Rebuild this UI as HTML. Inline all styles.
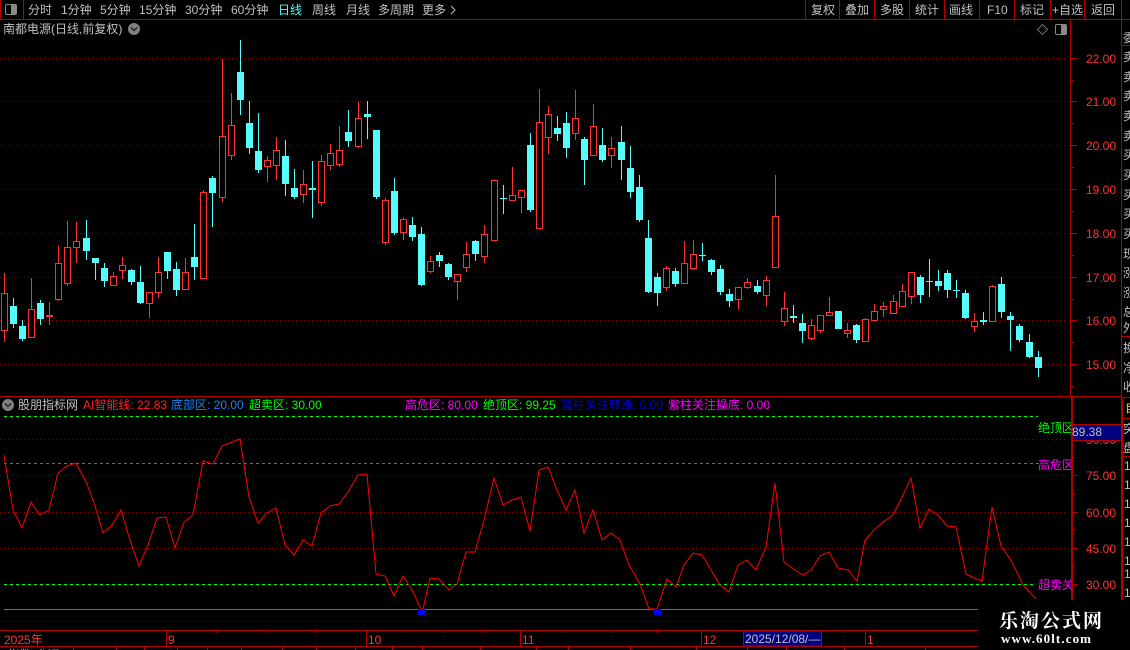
<!DOCTYPE html>
<html><head><meta charset="utf-8">
<style>
html,body{margin:0;padding:0;background:#000;width:1130px;height:650px;overflow:hidden}
svg{display:block;position:absolute;left:0;top:0}
text{font-family:"Liberation Sans","WenQuanYi Zen Hei","Noto Sans CJK SC",sans-serif;font-size:12px}
.t text{fill:#c0c0c0}
.ax text{fill:#ff3232}
</style></head><body>
<svg width="1130" height="650" viewBox="0 0 1130 650" xmlns="http://www.w3.org/2000/svg">
<rect width="1130" height="650" fill="#000"/>
<!-- upper grid -->
<g stroke="#8c0000" stroke-dasharray="1 3" shape-rendering="crispEdges">
<path d="M0 58.5H1068M0 101.5H1068M0 145.5H1068M0 189.5H1068M0 233.5H1068M0 277.5H1068M0 320.5H1068M0 364.5H1068"/>
<path d="M0 439.5H1066M0 475.5H1066M0 512.5H1066M0 548.5H1066M0 621.5H978"/>
</g>
<!-- frame lines -->
<g fill="#b40000" shape-rendering="crispEdges">
<rect x="0" y="19" width="1130" height="1"/>
<rect x="0" y="0" width="1" height="19"/>
<rect x="23" y="0" width="1" height="19"/>
<rect x="805" y="0" width="1" height="19"/><rect x="839" y="0" width="1" height="19"/><rect x="874" y="0" width="1" height="19"/><rect x="909" y="0" width="1" height="19"/><rect x="944" y="0" width="1" height="19"/><rect x="979" y="0" width="1" height="19"/><rect x="1014" y="0" width="1" height="19"/><rect x="1050" y="0" width="1" height="19"/><rect x="1084" y="0" width="1" height="19"/><rect x="1121" y="0" width="1" height="19"/>
<rect x="1070" y="20" width="1" height="377"/>
<rect x="0" y="396" width="1122" height="1"/>
<rect x="1121" y="20" width="1" height="377"/>
<rect x="1121" y="397" width="2" height="203"/>
<rect x="1122" y="45" width="8" height="1"/><rect x="1122" y="336" width="8" height="1"/><rect x="1122" y="397" width="8" height="1"/><rect x="1122" y="418" width="8" height="1"/><rect x="1122" y="456" width="8" height="1"/>
<rect x="0" y="630" width="978" height="1"/>
<rect x="0" y="646" width="978" height="1"/>
<rect x="166" y="630" width="1" height="16"/><rect x="366" y="630" width="1" height="16"/><rect x="520" y="630" width="1" height="16"/><rect x="701" y="630" width="1" height="16"/><rect x="865" y="630" width="1" height="16"/>
<path d="M216 631h1v2h-1zM266 631h1v2h-1zM316 631h1v2h-1zM405 631h1v2h-1zM443 631h1v2h-1zM482 631h1v2h-1zM565 631h1v2h-1zM611 631h1v2h-1zM656 631h1v2h-1zM843 631h1v2h-1z"/>
<path d="M43 647h1v3h-1zM73 647h1v3h-1zM116 647h1v3h-1zM144 647h1v3h-1zM177 647h1v3h-1zM207 647h1v3h-1zM241 647h1v3h-1zM282 647h1v3h-1zM316 647h1v3h-1zM355 647h1v3h-1zM392 647h1v3h-1zM422 647h1v3h-1zM480 647h1v3h-1zM536 647h1v3h-1zM568 647h1v3h-1zM630 647h1v3h-1zM696 647h1v3h-1zM747 647h1v3h-1zM786 647h1v3h-1zM844 647h1v3h-1zM925 647h1v3h-1z"/>
<path d="M1071 58h6v1h-6zM1071 101h6v1h-6zM1071 145h6v1h-6zM1071 189h6v1h-6zM1071 233h6v1h-6zM1071 277h6v1h-6zM1071 320h6v1h-6zM1071 364h6v1h-6z"/>
<path d="M1071 80h3v1h-3zM1071 123h3v1h-3zM1071 167h3v1h-3zM1071 211h3v1h-3zM1071 255h3v1h-3zM1071 299h3v1h-3zM1071 342h3v1h-3zM1071 386h3v1h-3z"/>
<path d="M1073 475h5v1h-5zM1073 512h5v1h-5zM1073 548h5v1h-5zM1073 584h5v1h-5zM1073 457h2v1h-2zM1073 494h2v1h-2zM1073 530h2v1h-2zM1073 566h2v1h-2z"/>
</g>
<!-- toolbar icon -->
<rect x="5.5" y="4.5" width="11" height="10" rx="1.5" fill="none" stroke="#8a8a8a"/><rect x="11" y="5" width="5" height="9" fill="#8a8a8a"/>
<rect x="1055.5" y="24.5" width="11" height="10" rx="1.5" fill="none" stroke="#8a8a8a"/><rect x="1061" y="25" width="5" height="9" fill="#8a8a8a"/>
<path d="M1042.5 24.5l5 5-5 5-5-5z" fill="none" stroke="#707070"/>
<!-- toolbar text -->
<g class="t">
<text x="28" y="14">分时</text><text x="61" y="14">1分钟</text><text x="100" y="14">5分钟</text><text x="139" y="14">15分钟</text><text x="185" y="14">30分钟</text><text x="231" y="14">60分钟</text>
<text x="278" y="14" style="fill:#54fcfc">日线</text>
<text x="312" y="14">周线</text><text x="346" y="14">月线</text><text x="378" y="14">多周期</text><text x="422" y="14">更多</text>
<text x="811" y="14">复权</text><text x="845" y="14">叠加</text><text x="880" y="14">多股</text><text x="915" y="14">统计</text><text x="949" y="14">画线</text><text x="987" y="14">F10</text><text x="1020" y="14">标记</text><text x="1052" y="14">+自选</text><text x="1091" y="14">返回</text>
<text x="3" y="33">南都电源(日线,前复权)</text>
<text x="18" y="409">股朋指标网</text>
</g>
<path d="M451 6l4 4-4 4" fill="none" stroke="#c0c0c0"/>
<circle cx="134" cy="29" r="6" fill="#808080"/><path d="M131 27.5l3 3 3-3" fill="none" stroke="#1a1a1a" stroke-width="1.3"/>
<circle cx="8" cy="405" r="6" fill="#808080"/><path d="M5 403.5l3 3 3-3" fill="none" stroke="#1a1a1a" stroke-width="1.3"/>
<!-- price axis -->
<g class="ax">
<text x="1086" y="63">22.00</text><text x="1086" y="106">21.00</text><text x="1086" y="150">20.00</text><text x="1086" y="194">19.00</text><text x="1086" y="238">18.00</text><text x="1086" y="282">17.00</text><text x="1086" y="325">16.00</text><text x="1086" y="369">15.00</text>
<text x="1086" y="480">75.00</text><text x="1086" y="517">60.00</text><text x="1086" y="553">45.00</text><text x="1086" y="589">30.00</text><text x="1086" y="444">90.00</text>
<text x="4" y="644">2025年</text><text x="168" y="644">9</text><text x="368" y="644">10</text><text x="522" y="644">11</text><text x="703" y="644">12</text><text x="867" y="644">1</text>
</g>
<!-- wicks -->
<path shape-rendering="crispEdges" fill="none" stroke="#ff3232" d="M4.5 273V342M31.5 278V338M49.5 302V325M58.5 246V301M67.5 221V286M76.5 222V263M113.5 272V285M122.5 257V279M149.5 292V318M158.5 257V298M185.5 258V290M203.5 190V278M222.5 59V202M231.5 93V160M267.5 156V182M276.5 137V180M303.5 170V203M321.5 155V206M330.5 144V170M339.5 126V167M358.5 102V148M385.5 198V245M403.5 217V240M430.5 256V273M457.5 274V300M466.5 242V272M484.5 225V263M494.5 179V241M512.5 167V200M521.5 190V213M539.5 89V228M548.5 106V154M575.5 90V140M593.5 104V155M611.5 137V168M666.5 266V291M684.5 241V283M693.5 240V270M738.5 287V310M747.5 278V289M766.5 276V306M775.5 175V267M784.5 292V326M811.5 319V340M820.5 315V333M829.5 297V316M847.5 323V338M865.5 318V341M874.5 304V320M883.5 302V317M893.5 295V314M902.5 284V306M911.5 272V304M974.5 313V332M992.5 285V321"/>
<path shape-rendering="crispEdges" fill="#000" stroke="#ff3232" d="M1.5 293.5h6v37h-6zM28.5 309.5h6v28h-6zM55.5 263.5h6v36h-6zM64.5 247.5h6v36h-6zM73.5 241.5h6v6h-6zM110.5 276.5h6v9h-6zM119.5 265.5h6v5h-6zM146.5 292.5h6v11h-6zM155.5 272.5h6v20h-6zM182.5 272.5h6v17h-6zM200.5 192.5h6v86h-6zM219.5 136.5h6v61h-6zM228.5 125.5h6v30h-6zM264.5 160.5h6v6h-6zM273.5 150.5h6v15h-6zM300.5 184.5h6v10h-6zM318.5 161.5h6v41h-6zM327.5 153.5h6v12h-6zM336.5 150.5h6v14h-6zM355.5 118.5h6v28h-6zM382.5 200.5h6v42h-6zM400.5 219.5h6v13h-6zM427.5 261.5h6v10h-6zM454.5 274.5h6v7h-6zM463.5 254.5h6v13h-6zM481.5 234.5h6v22h-6zM491.5 180.5h6v60h-6zM509.5 195.5h6v5h-6zM518.5 190.5h6v7h-6zM536.5 122.5h6v106h-6zM545.5 114.5h6v23h-6zM572.5 118.5h6v15h-6zM590.5 126.5h6v29h-6zM608.5 148.5h6v7h-6zM663.5 268.5h6v19h-6zM681.5 263.5h6v20h-6zM690.5 254.5h6v14h-6zM735.5 287.5h6v12h-6zM744.5 282.5h6v5h-6zM763.5 280.5h6v15h-6zM772.5 216.5h6v51h-6zM781.5 308.5h6v13h-6zM808.5 325.5h6v13h-6zM817.5 315.5h6v15h-6zM826.5 312.5h6v3h-6zM844.5 330.5h6v3h-6zM862.5 319.5h6v22h-6zM871.5 311.5h6v9h-6zM880.5 306.5h6v3h-6zM890.5 301.5h6v12h-6zM899.5 291.5h6v15h-6zM908.5 272.5h6v24h-6zM971.5 321.5h6v5h-6zM989.5 286.5h6v35h-6z"/>
<rect x="46" y="315" width="7" height="2" fill="#ff3232"/>
<path shape-rendering="crispEdges" fill="none" stroke="#54fcfc" d="M13.5 298V328M22.5 320V341M40.5 300V325M86.5 220V260M95.5 258V280M104.5 263V287M131.5 269V285M140.5 266V304M167.5 252V279M176.5 262V296M194.5 224V280M212.5 176V227M240.5 40V115M249.5 101V154M258.5 113V173M285.5 140V196M294.5 169V199M312.5 161V218M348.5 110V147M367.5 101V139M376.5 130V199M394.5 178V235M412.5 217V241M421.5 227V286M439.5 252V267M448.5 263V280M475.5 240V261M503.5 185V214M530.5 133V212M557.5 116V141M566.5 112V158M584.5 137V185M602.5 128V162M621.5 126V180M630.5 146V198M639.5 175V222M648.5 220V293M657.5 273V306M675.5 268V287M702.5 243V261M711.5 259V275M720.5 265V295M729.5 289V307M757.5 280V294M793.5 305V323M802.5 314V343M838.5 311V329M856.5 324V343M920.5 275V303M929.5 259V297M938.5 270V291M947.5 270V298M956.5 280V298M965.5 290V319M983.5 312V325M1001.5 277V318M1010.5 312V351M1019.5 324V342M1029.5 334V358M1038.5 351V377"/>
<path shape-rendering="crispEdges" fill="#54fcfc" d="M10 306h7v18h-7zM19 326h7v13h-7zM37 303h7v16h-7zM83 238h7v13h-7zM92 258h7v5h-7zM101 268h7v13h-7zM128 270h7v12h-7zM137 282h7v21h-7zM164 252h7v19h-7zM173 269h7v21h-7zM191 257h7v10h-7zM209 178h7v15h-7zM237 72h7v28h-7zM246 123h7v25h-7zM255 151h7v19h-7zM282 156h7v28h-7zM291 188h7v9h-7zM309 188h7v2h-7zM345 132h7v9h-7zM364 114h7v3h-7zM373 130h7v67h-7zM391 191h7v42h-7zM409 225h7v12h-7zM418 234h7v51h-7zM436 255h7v6h-7zM445 264h7v13h-7zM472 241h7v13h-7zM500 198h7v1h-7zM527 145h7v65h-7zM554 128h7v6h-7zM563 123h7v25h-7zM581 139h7v21h-7zM599 145h7v15h-7zM618 142h7v18h-7zM627 168h7v24h-7zM636 187h7v33h-7zM645 238h7v54h-7zM654 277h7v16h-7zM672 271h7v13h-7zM699 255h7v1h-7zM708 260h7v12h-7zM717 269h7v23h-7zM726 294h7v7h-7zM754 286h7v6h-7zM790 316h7v2h-7zM799 323h7v8h-7zM835 311h7v18h-7zM853 325h7v15h-7zM917 277h7v18h-7zM926 281h7v1h-7zM935 281h7v5h-7zM944 273h7v17h-7zM953 290h7v1h-7zM962 293h7v25h-7zM980 320h7v2h-7zM998 284h7v28h-7zM1007 316h7v4h-7zM1016 326h7v14h-7zM1026 342h7v15h-7zM1035 357h7v11h-7z"/>
<!-- indicator header -->
<text x="83" y="409" fill="#ff2020">AI智能线: 22.83</text>
<text x="171" y="409" fill="#1e80f0">底部区: 20.00</text>
<text x="249" y="409" fill="#00ff00">超卖区: 30.00</text>
<text x="405" y="409" fill="#ff00ff">高危区: 80.00</text>
<text x="483" y="409" fill="#00ff00">绝顶区: 99.25</text>
<text x="561" y="409" fill="#0000e0">蓝柱关注转涨: 0.00</text>
<text x="668" y="409" fill="#ff00ff">紫柱关注操底: 0.00</text>
<!-- dashed levels -->
<g shape-rendering="crispEdges" fill="none">
<path d="M4 416.5H1038M4 584.5H1036" stroke="#00ff00" stroke-dasharray="3 3"/>
<path d="M4 463.5H1040" stroke="#ff00ff" stroke-dasharray="3 3"/>
<path d="M4 609.5H978" stroke="#1e80e0"/>
</g>
<!-- line -->
<polyline fill="none" stroke="#ff0000" stroke-width="1" points="4,455 13,510 22,528 31,502 40,515 49,510 58,473 67,466 76,463 87,484 94,503 103,533 112,525 121,510 130,540 139,566 148,545 157,518 166,517 175,548 184,522 193,515 203,461 213,464 222,446 240,439 249,497 258,523 267,513 276,508 285,545 294,555 303,540 312,546 321,513 330,506 339,504 348,492 358,475 367,474 376,574 385,576 394,596 403,576 412,590 421,609 423,609 430,578 439,579 449,590 457,584 466,552 475,552 484,520 494,478 503,505 512,500 521,497 530,531 539,470 548,467 557,490 566,510 575,490 584,533 593,510 602,540 611,533 620,540 629,565 640,584 649,609 657,609 667,579 676,587 684,565 693,553 702,555 711,570 720,585 729,592 738,565 747,560 756,570 766,547 775,483 784,562 795,570 803,575 811,570 820,556 829,552 838,568 848,570 857,581 865,540 874,530 883,522 893,515 902,497 911,478 920,528 929,509 938,515 947,526 956,527 966,574 974,578 982,581 992,507 1001,546 1011,560 1023,585 1036,599"/>
<rect x="418" y="609" width="7" height="6" fill="#0000ff"/>
<rect x="654" y="609" width="7" height="6" fill="#0000ff"/>
<!-- line labels -->
<text x="1038" y="432" fill="#00ff00">绝顶区</text>
<text x="1038" y="469" fill="#ff00ff">高危区</text>
<text x="1038" y="589" fill="#ff00ff">超卖关</text>
<rect x="1071" y="397" width="2" height="203" fill="#b40000" shape-rendering="crispEdges"/>
<!-- value box -->
<rect x="1073" y="424" width="48" height="16" fill="#000080"/>
<path d="M1073 424.5H1121M1073 440.5H1121" stroke="#b40000" shape-rendering="crispEdges"/>
<text x="1072" y="436" fill="#c0c0c0">89.38</text>
<rect x="743.5" y="631" width="78" height="15" fill="#000080" stroke="#b40000"/>
<text x="745" y="643" fill="#c0c0c0">2025/12/08/—</text>
<!-- right column clipped -->
<g class="t">
<text x="1123" y="42">委</text><text x="1123" y="61">卖</text><text x="1123" y="81">卖</text><text x="1123" y="100">卖</text><text x="1123" y="120">卖</text><text x="1123" y="140">卖</text><text x="1123" y="159">买</text><text x="1123" y="179">买</text><text x="1123" y="199">买</text><text x="1123" y="218">买</text><text x="1123" y="238">买</text><text x="1123" y="258">现</text><text x="1123" y="277">涨</text><text x="1123" y="297">涨</text><text x="1123" y="316">总</text><text x="1123" y="332">外</text><text x="1123" y="352">换</text><text x="1123" y="372">净</text><text x="1123" y="391">收</text>
<text x="1125" y="412" style="fill:#e0e000">自</text><text x="1123" y="433">突</text><text x="1123" y="452">盘</text>
<text x="1124" y="470">1</text><text x="1124" y="489">1</text><text x="1124" y="508">1</text><text x="1124" y="527">1</text><text x="1124" y="546">1</text><text x="1124" y="565">1</text><text x="1124" y="578">1</text><text x="1124" y="597">1</text>
</g>
<text x="8" y="659" fill="#c0c0c0">指数 上证</text>
<!-- watermark -->
<rect x="978" y="600" width="152" height="50" fill="#000"/>
<text x="999" y="627" fill="#fff" font-weight="700" style="font-family:'Noto Serif CJK SC','Liberation Serif',serif;font-size:19px;letter-spacing:2px">乐淘公式网</text>
<text x="1001" y="643" fill="#fff" font-weight="700" textLength="90" style="font-family:'Liberation Serif',serif;font-size:13px">www.60lt.com</text>
</svg>
</body></html>
